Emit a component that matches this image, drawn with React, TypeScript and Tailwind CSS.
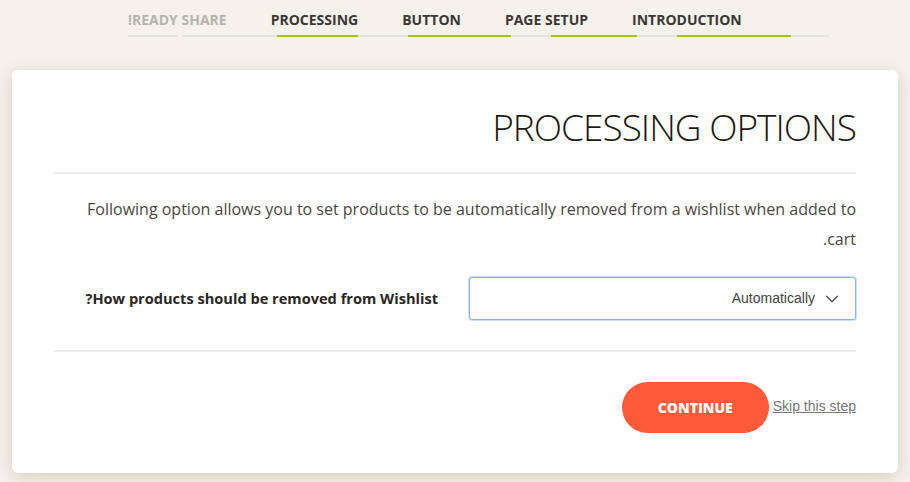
import { ChevronDown } from 'lucide-react'

const steps = [
  { label: 'READY SHARE!', done: false },
  { label: 'PROCESSING', done: true },
  { label: 'BUTTON', done: true },
  { label: 'PAGE SETUP', done: true },
  { label: 'INTRODUCTION', done: true },
]

// underline pieces under the step labels, left to right (width px, colour)
const track = [
  { w: 50, c: 'bg-[#e6e4e1]' },
  { w: 4, c: 'bg-transparent' },
  { w: 95, c: 'bg-[#e6e4e1]' },
  { w: 81, c: 'bg-[#a5c40c]' },
  { w: 50, c: 'bg-[#e6e4e1]' },
  { w: 103, c: 'bg-[#a5c40c]' },
  { w: 40, c: 'bg-[#e6e4e1]' },
  { w: 86, c: 'bg-[#a5c40c]' },
  { w: 40, c: 'bg-[#e6e4e1]' },
  { w: 114, c: 'bg-[#a5c40c]' },
  { w: 39, c: 'bg-[#e6e4e1]' },
]

function Stepper() {
  return (
    <div className="ml-[128px] w-[702px] pt-[10px]">
      <div className="flex gap-[44px] text-[14px] font-bold leading-[20px]">
        {steps.map((s) => (
          <span key={s.label} dir="rtl" className={s.done ? 'text-[#3a3735]' : 'text-[#b7b2ad]'}>
            {s.label}
          </span>
        ))}
      </div>
      <div className="mt-[5px] flex h-[2px]">
        {track.map((t, i) => (
          <div key={i} className={`h-[2px] ${t.c}`} style={{ width: t.w }} />
        ))}
      </div>
    </div>
  )
}

export default function App() {
  return (
    <div
      className="min-h-[482px] w-[910px] overflow-hidden bg-[#f5f2ec] pb-[9px]"
      style={{ fontFamily: '"Open Sans", "Liberation Sans", sans-serif' }}
    >
      <Stepper />
      <div
        dir="rtl"
        className="mx-[12px] mt-[33px] h-[403px] rounded-[6px] bg-white px-[42px] pt-[34px] shadow-[0_4px_16px_rgba(150,120,85,0.3)]"
      >
        <h1 className="text-[37px] font-light leading-[46px] tracking-[-1px] text-[#1d1915]">PROCESSING OPTIONS</h1>
        <div className="mt-[22px] h-[2px] bg-[#ececec]" />
        <p className="mt-[20px] text-[16px] leading-[30px] text-[#4b4643]">
          Following option allows you to set products to be automatically removed from a wishlist when added to
          cart.
        </p>
        <div dir="ltr" className="mt-[23px] flex items-center justify-end">
          <label dir="rtl" className="text-[14.6px] font-bold text-[#2a2623]">
            How products should be removed from Wishlist?
          </label>
          <div
            className="ml-[31px] flex h-[43px] w-[387px] items-center justify-end gap-[6px] rounded-[3px] border border-[#8ab0f0] bg-white pr-[12px] shadow-[0_0_0_1px_rgba(138,176,240,0.4)]"
            style={{ fontFamily: '"Liberation Sans", Arial, sans-serif' }}
          >
            <span className="text-[14px] text-[#444]">Automatically</span>
            <ChevronDown size={22} strokeWidth={1.5} className="text-[#555]" />
          </div>
        </div>
        <div className="mt-[30px] h-[2px] bg-[#ececec]" />
        <div className="mt-[30px] flex items-center justify-end gap-[4px]" dir="ltr">
          <button className="h-[51px] w-[147px] rounded-full bg-[#ff5a3a] text-[14px] font-extrabold text-white">
            CONTINUE
          </button>
          <a
            href="#"
            className="pb-[2px] text-[14px] text-[#777] underline"
            style={{ fontFamily: '"Liberation Sans", Arial, sans-serif' }}
          >
            Skip this step
          </a>
        </div>
      </div>
    </div>
  )
}
